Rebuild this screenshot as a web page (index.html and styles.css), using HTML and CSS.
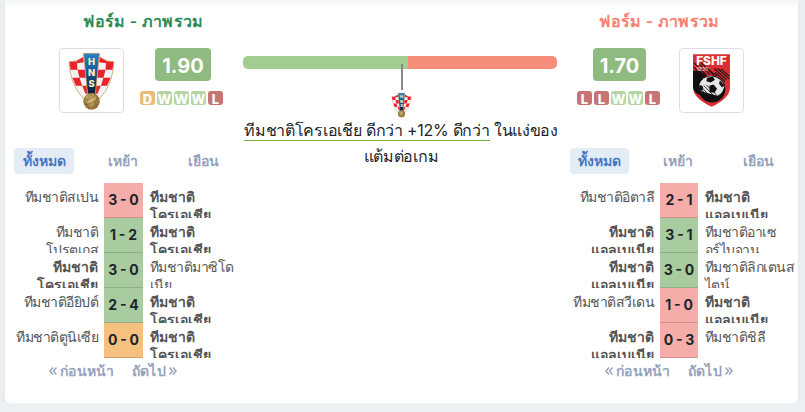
FILE: index.html
```html
<!DOCTYPE html>
<html lang="th">

<head>
  <meta charset="UTF-8">
  <meta name="viewport" content="width=device-width, initial-scale=1.0">
  <title>ฟอร์ม - ภาพรวม</title>
  <link rel="stylesheet" href="styles.css">
</head>

<body>

  <svg class="defs" width="0" height="0">
    <symbol id="croatia" viewBox="200 150 146 180">
      <path d="M206 182Q230 182 247 169L299 169Q316 182 340 182Q338 250 298 292L248 292Q208 250 206 182z" fill="#f4f1f2" stroke="#c9a263" stroke-width="2.5" />
      <g id="checks" fill="#e8232b">
        <path d="M229 179L248 169L250 184L229 187zM207 183L229 181L231 206L210 206zM231 206L253 206L256 230L237 230zM216 230L237 230L245 254L226 254zM245 254L259 254L262 278L255 278z" />
      </g>
      <use href="#checks" transform="matrix(-1 0 0 1 546 0)" />
      <path d="M249 157H297L284 285H262z" fill="url(#stripe)" stroke="#c9a263" stroke-width="2.5" />
      <g class="crest-letters" font-size="28" fill="#fff3b8" text-anchor="middle">
        <text x="273" y="192">H</text>
        <text x="273" y="225">N</text>
        <text x="273" y="257">S</text>
      </g>
      <circle cx="273" cy="301" r="25" fill="url(#gold)" />
      <path d="M250 294Q264 304 286 280M251 309Q272 315 295 290M265 325Q263 307 252 301M278 325Q287 317 284 300M273 277Q267 291 258 298M288 282Q295 303 286 319" fill="none" stroke="#725729" stroke-width="2" />
    </symbol>
    <symbol id="albania" viewBox="399 162 111 158">
      <path d="M399 162H510V262Q510 294 455 320Q399 294 399 262z" fill="#da3034" />
      <path d="M399 212L420 212L450 236L440 290Q399 285 399 255z" fill="#130e10" />
      <path d="M402 188L440 226M400 200L440 240M412 186L450 224M424 188L462 226M438 202L470 228M463 205L500 239M473 205L508 236M483 206L508 228M466 217L495 244" stroke="#261115" stroke-width="3.5" />
      <circle cx="456" cy="267" r="40" fill="#111" />
      <path d="M418 252Q428 228 455 228Q485 232 493 260Q486 280 477 288L425 274Q415 265 418 252z" fill="#e8e8e8" />
      <path d="M441 233L458 229L465 239L452 247L439 243zM480 240L493 257L486 262L477 250zM448 257L461 253L471 266L464 278L449 276zM418 253L429 259L428 272L417 268zM439 281L453 288L440 301zM474 286L486 278L479 294z" fill="#101010" />
      <path d="M424 260L455 294M431 256L466 291M439 254L478 293M417 264L444 293M428 272L449 293" stroke="#101010" stroke-width="2.5" />
      <text class="crest-letters" x="454.500" y="196" font-size="34" text-anchor="middle" textLength="92" lengthAdjust="spacingAndGlyphs" fill="#fff">FSHF</text>
      <text class="crest-year" x="410" y="213" font-size="14" textLength="34" fill="#fff">1930</text>
    </symbol>
    <defs>
      <linearGradient id="stripe" x2="0" y2="1">
        <stop offset="0" stop-color="#2684c6" />
        <stop offset=".45" stop-color="#165796" />
        <stop offset="1" stop-color="#071729" />
      </linearGradient>
      <radialGradient id="gold" cx=".45" cy=".4">
        <stop offset="0" stop-color="#dec47f" />
        <stop offset="1" stop-color="#9a793d" />
      </radialGradient>
    </defs>
  </svg>

  <div class="card">
    <div class="side home">
      <h2 class="title">ฟอร์ม - ภาพรวม</h2>
      <div class="summary">
        <div class="logo"><svg width="49" height="60"><use href="#croatia" /></svg></div>
        <div class="rating">
          <div class="points">1.90</div>
          <div class="form">
            <span class="draw">D</span><span class="win">W</span><span class="win">W</span><span class="win">W</span><span class="loss">L</span>
          </div>
        </div>
      </div>
      <div class="tabs">
        <a class="active">ทั้งหมด</a>
        <a>เหย้า</a>
        <a>เยือน</a>
      </div>
      <div class="matches">
        <div class="team">ทีมชาติสเปน</div>
        <div class="score lost">3 - 0</div>
        <div class="team own">ทีมชาติ<br>โครเอเชีย</div>
        <div class="team">ทีมชาติ<br>โปรตุเกส</div>
        <div class="score won">1 - 2</div>
        <div class="team own">ทีมชาติ<br>โครเอเชีย</div>
        <div class="team own">ทีมชาติ<br>โครเอเชีย</div>
        <div class="score won">3 - 0</div>
        <div class="team">ทีมชาติมาซิโด<br>เนีย</div>
        <div class="team">ทีมชาติอียิปต์</div>
        <div class="score won">2 - 4</div>
        <div class="team own">ทีมชาติ<br>โครเอเชีย</div>
        <div class="team">ทีมชาติตูนิเซีย</div>
        <div class="score drawn">0 - 0</div>
        <div class="team own">ทีมชาติ<br>โครเอเชีย</div>
      </div>
      <div class="pager">
        <a><svg class="arrow" viewBox="0 0 8 10"><path d="M4 1.500L1 5L4 8.500M7.500 1.500L4.500 5L7.500 8.500" /></svg>ก่อนหน้า</a>
        <a>ถัดไป<svg class="arrow" viewBox="0 0 8 10"><path d="M.5 1.500L3.500 5L.5 8.500M4 1.500L7 5L4 8.500" /></svg></a>
      </div>
    </div>

    <div class="compare">
      <div class="bar"></div>
      <div class="marker"></div>
      <svg class="mini" width="21" height="26"><use href="#croatia" /></svg>
      <p class="verdict"><span>ทีมชาติโครเอเชีย ดีกว่า +12% ดีกว่า</span> ในแง่ของ<br>แต้มต่อเกม</p>
    </div>

    <div class="side away">
      <h2 class="title">ฟอร์ม - ภาพรวม</h2>
      <div class="summary">
        <div class="rating">
          <div class="points">1.70</div>
          <div class="form">
            <span class="loss">L</span><span class="loss">L</span><span class="win">W</span><span class="win">W</span><span class="loss">L</span>
          </div>
        </div>
        <div class="logo"><svg width="37" height="53"><use href="#albania" /></svg></div>
      </div>
      <div class="tabs">
        <a class="active">ทั้งหมด</a>
        <a>เหย้า</a>
        <a>เยือน</a>
      </div>
      <div class="matches">
        <div class="team">ทีมชาติอิตาลี</div>
        <div class="score lost">2 - 1</div>
        <div class="team own">ทีมชาติ<br>แอลเบเนีย</div>
        <div class="team own">ทีมชาติ<br>แอลเบเนีย</div>
        <div class="score won">3 - 1</div>
        <div class="team">ทีมชาติอาเซ<br>อร์ไบจาน</div>
        <div class="team own">ทีมชาติ<br>แอลเบเนีย</div>
        <div class="score won">3 - 0</div>
        <div class="team">ทีมชาติลิกเตนส<br>ไตน์</div>
        <div class="team">ทีมชาติสวีเดน</div>
        <div class="score lost">1 - 0</div>
        <div class="team own">ทีมชาติ<br>แอลเบเนีย</div>
        <div class="team own">ทีมชาติ<br>แอลเบเนีย</div>
        <div class="score lost">0 - 3</div>
        <div class="team">ทีมชาติชิลี</div>
      </div>
      <div class="pager">
        <a><svg class="arrow" viewBox="0 0 8 10"><path d="M4 1.500L1 5L4 8.500M7.500 1.500L4.500 5L7.500 8.500" /></svg>ก่อนหน้า</a>
        <a>ถัดไป<svg class="arrow" viewBox="0 0 8 10"><path d="M.5 1.500L3.500 5L.5 8.500M4 1.500L7 5L4 8.500" /></svg></a>
      </div>
    </div>
  </div>

</body>

</html>
```
FILE: styles.css
```css
* {
  box-sizing: border-box;
}

body {
  margin: 0;
  background: #ecf0f3;
  color: #212529;
  font-family: Inter, sans-serif;
  font-size: 14px;
  overflow: hidden;
}

.defs {
  display: block;
}

.card {
  display: grid;
  grid-template-columns: 231px 330px 232px;
  width: 793px;
  height: 403px;
  margin-left: 5px;
  background: linear-gradient(#f5f7f7, #fff 9px);
  border-radius: 0 0 5px 5px;
  box-shadow: 0 1px 6px rgba(100, 120, 140, 0.08);
}

.title {
  height: 24px;
  margin: 9px 0 15px;
  font-size: 16px;
  font-weight: 600;
  line-height: 24px;
  letter-spacing: 0.3px;
  text-align: center;
  white-space: nowrap;
}

.home .title {
  padding-left: 46px;
  color: #2e8b57;
}

.away .title {
  padding-right: 45px;
  color: #fa8072;
}

.summary {
  display: flex;
  height: 100px;
}

.home .summary {
  padding-left: 54px;
  gap: 16px;
}

.away .summary {
  padding-left: 11px;
  gap: 19px;
}

.logo {
  display: flex;
  align-items: center;
  justify-content: center;
  width: 65px;
  height: 65px;
  border: 1px solid #dcdfe9;
  border-radius: 4px;
}

.rating {
  display: flex;
  flex-direction: column;
  align-items: center;
  gap: 10px;
}

.points {
  width: 56px;
  height: 33px;
  margin-left: 3px;
  background: #90bb80;
  border-radius: 4px;
  color: #fff;
  font-size: 20px;
  font-weight: 700;
  line-height: 36px;
  text-align: center;
}

.away .points {
  width: 53px;
  margin-left: 2px;
}

.form {
  display: flex;
  gap: 2px;
}

.form span {
  width: 15px;
  height: 14px;
  border-radius: 3px;
  color: #fff;
  font-size: 13px;
  font-weight: 800;
  line-height: 16px;
  text-align: center;
}

.win {
  background: #b3d6a3;
}

.draw {
  background: #e9bc78;
}

.loss {
  background: #c87475;
}

.tabs {
  display: grid;
  grid-template-columns: 60px 98px 62px;
  height: 26px;
  margin-left: 9px;
  color: #95a3bc;
  font-weight: 600;
  line-height: 26px;
  text-align: center;
}

.away .tabs {
  grid-template-columns: 59px 98px 62px;
  margin-left: 4px;
}

.tabs .active {
  background: #e4ecf6;
  border-radius: 4px;
  color: #4a78c3;
}

.matches {
  display: grid;
  grid-template-columns: 99px 39px 1fr;
  grid-auto-rows: 35px;
  margin-top: 9px;
}

.away .matches {
  grid-template-columns: 94px 38px 1fr;
}

.team {
  height: 35px;
  padding: 5px 0 0 7px;
  color: #555;
  line-height: 18px;
  letter-spacing: -0.55px;
  white-space: nowrap;
  overflow: hidden;
}

.team:nth-child(3n+1) {
  padding: 5px 6px 0 0;
  text-align: right;
}

.team.own {
  font-weight: 600;
  letter-spacing: 0;
}

.score {
  border-bottom: 1px solid rgba(0, 0, 0, 0.15);
  font-weight: 700;
  line-height: 34px;
  word-spacing: -0.5px;
  text-align: center;
  white-space: nowrap;
}

.won {
  background: #a8cc9f;
}

.drawn {
  background: #f6c07e;
}

.lost {
  background: #f6aca9;
}

.pager {
  display: flex;
  gap: 17px;
  padding: 2px 0 0 44px;
  color: #95a3bc;
  font-weight: 600;
  line-height: 22px;
  letter-spacing: 0.3px;
}

.away .pager {
  padding-left: 39px;
}

.pager a {
  display: flex;
  align-items: center;
  gap: 3px;
}

.arrow {
  width: 8px;
  height: 10px;
  fill: none;
  stroke: currentColor;
  stroke-width: 1.5;
}

.compare {
  display: flex;
  flex-direction: column;
  align-items: center;
  padding: 56px 2px 0 0;
}

.bar {
  width: 314px;
  height: 13px;
  background: linear-gradient(90deg, #a3cd90 165px, #f68d78 165px);
  border-radius: 5px;
}

.marker {
  width: 2px;
  height: 26px;
  margin: -5px 0 2px 4px;
  background: #888;
}

.mini {
  margin-left: 3px;
}

.verdict {
  margin: -1px 0 0 2px;
  font-size: 16px;
  line-height: 26px;
  letter-spacing: -0.27px;
  text-align: center;
  white-space: nowrap;
}

.verdict span {
  border-bottom: 1px solid #6fb83f;
}

.crest-letters {
  font-family: Inter, sans-serif;
  font-weight: 800;
}

.crest-year {
  font-family: Inter, sans-serif;
}
```
